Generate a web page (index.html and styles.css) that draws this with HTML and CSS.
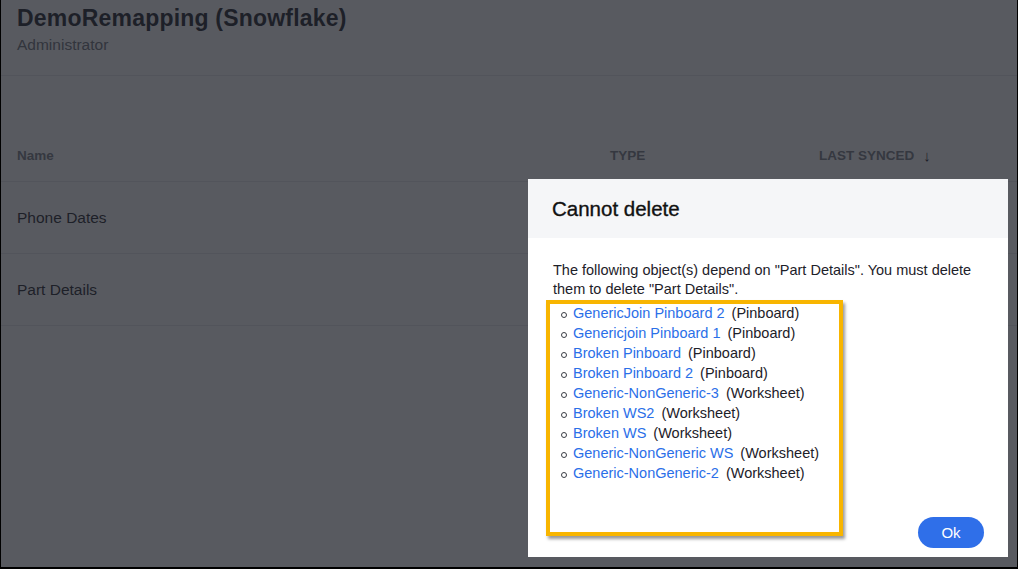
FILE: index.html
```html
<!DOCTYPE html>
<html>
<head>
<meta charset="utf-8">
<link rel="stylesheet" href="styles.css">
</head>
<body>
<div class="frame">
  <div class="page">
    <header class="page-head">
      <h1 class="title">DemoRemapping (Snowflake)</h1>
      <div class="subtitle">Administrator</div>
    </header>
    <div class="table">
      <div class="row head-row">
        <div class="c-name">Name</div>
        <div class="c-type">TYPE</div>
        <div class="c-sync">LAST SYNCED <span class="arrow">&#8595;</span></div>
      </div>
      <div class="row"><div class="c-name">Phone Dates</div></div>
      <div class="row"><div class="c-name">Part Details</div></div>
    </div>
  </div>
  <div class="overlay"></div>
  <div class="dialog">
    <div class="dialog-head">Cannot delete</div>
    <div class="dialog-body">
      <p class="msg">The following object(s) depend on "Part Details". You must delete them to delete "Part Details".</p>
      <ul class="deps">
        <li><a>GenericJoin Pinboard 2</a><span class="kind">(Pinboard)</span></li>
        <li><a>Genericjoin Pinboard 1</a><span class="kind">(Pinboard)</span></li>
        <li><a>Broken Pinboard</a><span class="kind">(Pinboard)</span></li>
        <li><a>Broken Pinboard 2</a><span class="kind">(Pinboard)</span></li>
        <li><a>Generic-NonGeneric-3</a><span class="kind">(Worksheet)</span></li>
        <li><a>Broken WS2</a><span class="kind">(Worksheet)</span></li>
        <li><a>Broken WS</a><span class="kind">(Worksheet)</span></li>
        <li><a>Generic-NonGeneric WS</a><span class="kind">(Worksheet)</span></li>
        <li><a>Generic-NonGeneric-2</a><span class="kind">(Worksheet)</span></li>
      </ul>
      <div class="actions"><button class="ok">Ok</button></div>
    </div>
    <div class="highlight"></div>
  </div>
</div>
</body>
</html>
```

FILE: styles.css
```css
* { box-sizing: border-box; }
html, body { margin: 0; padding: 0; }
body {
  width: 1018px;
  height: 569px;
  overflow: hidden;
  font-family: "Liberation Sans", Arial, sans-serif;
  background: #000;
}
.frame {
  position: relative;
  width: 1016px;
  height: 567px;
  margin-left: 1px;
  background: #fff;
  overflow: hidden;
}
.page { color: #1d2129; }
.page-head {
  height: 76px;
  padding: 4px 16px 0;
  border-bottom: 1px solid #e6e8ea;
}
.title {
  margin: 0;
  font-size: 23px;
  font-weight: bold;
  line-height: 28px;
  letter-spacing: 0.2px;
  color: #1d2129;
}
.subtitle {
  margin-top: 4px;
  font-size: 15.5px;
  line-height: 18px;
  color: #6b6f77;
}
.table { padding-top: 54px; }
.row {
  display: flex;
  align-items: center;
  height: 72px;
  padding-left: 16px;
  border-bottom: 1px solid #e6e8ea;
  font-size: 15.5px;
  color: #1d2129;
}
.head-row {
  height: 52px;
  font-size: 13.5px;
  font-weight: bold;
  color: #777b83;
}
.c-name { width: 593px; }
.c-type { width: 209px; }
.c-sync { display: flex; align-items: center; gap: 9px; }
.arrow { font-size: 15px; color: #1d2129; font-weight: bold; }
.overlay {
  position: absolute;
  inset: 0;
  background: rgba(30, 33, 40, 0.74);
}
.dialog {
  position: absolute;
  left: 527px;
  top: 179px;
  width: 480px;
  height: 378px;
  background: #fff;
  display: flex;
  flex-direction: column;
}
.dialog-head {
  height: 59px;
  background: #f5f6f8;
  padding: 0 24px;
  display: flex;
  align-items: center;
  font-size: 20.5px;
  -webkit-text-stroke: 0.35px #111;
  color: #111;
}
.dialog-body {
  flex: 1;
  padding: 23px 24px 9px 25px;
  display: flex;
  flex-direction: column;
  font-size: 14.5px;
  color: #1d2129;
}
.msg {
  margin: 0;
  line-height: 19px;
}
.deps {
  margin: 4px 0 0;
  padding-left: 20px;
  list-style: none;
  line-height: 20px;
}
.deps li {
  position: relative;
}
.deps li::before {
  content: "";
  position: absolute;
  left: -12px;
  top: 9px;
  width: 4px;
  height: 4px;
  border: 1px solid #3a3d44;
  border-radius: 50%;
}
.deps a { color: #2b6fe8; }
.kind { margin-left: 7px; }
.actions {
  margin-top: auto;
  display: flex;
  justify-content: flex-end;
}
.ok {
  width: 66px;
  height: 31px;
  border: none;
  border-radius: 16px;
  background: #2f6fe9;
  color: #fff;
  font-family: "Liberation Sans", Arial, sans-serif;
  font-size: 15px;
}
.highlight {
  position: absolute;
  left: 18px;
  top: 121px;
  width: 297px;
  height: 236px;
  border: 4px solid #f8b500;
  box-shadow: 2px 3px 3px rgba(0, 0, 0, 0.4);
}
```
